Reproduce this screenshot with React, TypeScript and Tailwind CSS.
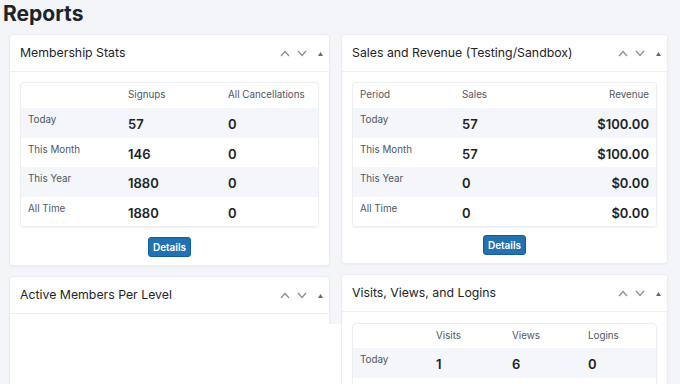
const membership = [
  { label: 'Today', signups: '57', cancels: '0' },
  { label: 'This Month', signups: '146', cancels: '0' },
  { label: 'This Year', signups: '1880', cancels: '0' },
  { label: 'All Time', signups: '1880', cancels: '0' },
]

const sales = [
  { label: 'Today', sales: '57', revenue: '$100.00' },
  { label: 'This Month', sales: '57', revenue: '$100.00' },
  { label: 'This Year', sales: '0', revenue: '$0.00' },
  { label: 'All Time', sales: '0', revenue: '$0.00' },
]

const HeaderControls = () => (
  <div className="flex items-center">
    <svg width="10" height="7" viewBox="0 0 10 7" className="mr-[7px]">
      <polyline points="1,6 5,1.5 9,6" fill="none" stroke="#8c8f94" strokeWidth="1.3" />
    </svg>
    <svg width="10" height="7" viewBox="0 0 10 7" className="mr-[11px]">
      <polyline points="1,1 5,5.5 9,1" fill="none" stroke="#8c8f94" strokeWidth="1.3" />
    </svg>
    <svg width="5" height="4" viewBox="0 0 5 4">
      <polygon points="0,4 2.5,0 5,4" fill="#646970" />
    </svg>
  </div>
)

const Panel = ({ title, className, children }: { title: string; className?: string; children?: React.ReactNode }) => (
  <div className={`bg-white rounded-[4px] border border-[#e9ecf0] shadow-[0_1px_2px_rgba(0,0,0,0.04)] flex flex-col ${className ?? ''}`}>
    <div className="h-[37px] shrink-0 flex items-center justify-between pl-[10px] pr-[6px] pt-[1px] border-b border-[#eef0f3]">
      <span className="text-[12.3px] text-[#1d2327]">{title}</span>
      <HeaderControls />
    </div>
    {children}
  </div>
)

const DetailsButton = () => (
  <div className="flex justify-center">
    <button className="h-[20px] w-[43px] bg-[#2271b1] border border-[#135e96] rounded-[3px] text-white text-[10px] font-semibold">
      Details
    </button>
  </div>
)

export default function App() {
  return (
    <div
      className="w-[680px] h-[384px] overflow-hidden bg-[#f3f5f8] text-[#1d2327]"
      style={{ fontFamily: 'Inter, "Liberation Sans", sans-serif' }}
    >
      <h1 className="text-[21px] font-bold leading-[28px] pl-[3px] h-[34px]">Reports</h1>
      <div className="flex pl-[9px] gap-[11px]">
        {/* left column */}
        <div className="w-[321px] flex flex-col gap-[10px]">
          <Panel title="Membership Stats" className="h-[232px]">
            <div className="px-[10px] pt-[10px]">
              <div className="rounded-[4px] border border-[#eceef2] shadow-[0_1px_2px_rgba(0,0,0,0.06)] overflow-hidden">
                <div className="grid grid-cols-[100px_100px_1fr] pl-[7px] h-[25px] items-center text-[9.8px] text-[#50575e]">
                  <span></span>
                  <span>Signups</span>
                  <span>All Cancellations</span>
                </div>
                {membership.map((r, i) => (
                  <div
                    key={r.label}
                    className={`grid grid-cols-[100px_100px_1fr] pl-[7px] h-[29.5px] items-start ${i % 2 === 0 ? 'bg-[#f4f6f9]' : 'bg-white'}`}
                  >
                    <span className="text-[9.8px] text-[#50575e] pt-[5px] leading-[14px]">{r.label}</span>
                    <span className="text-[13px] font-semibold pt-[7px] leading-[18px]">{r.signups}</span>
                    <span className="text-[13px] font-semibold pt-[7px] leading-[18px]">{r.cancels}</span>
                  </div>
                ))}
              </div>
            </div>
            <div className="mt-[10px]">
              <DetailsButton />
            </div>
          </Panel>
          <Panel title="Active Members Per Level" className="h-[200px]">
            <div className="flex-1 pt-[10px]">
              <div className="w-[calc(100%+12px)] h-full bg-white"></div>
            </div>
          </Panel>
        </div>

        {/* right column */}
        <div className="w-[327px] flex flex-col gap-[10px]">
          <Panel title="Sales and Revenue (Testing/Sandbox)" className="h-[230px]">
            <div className="px-[10px] pt-[10px]">
              <div className="rounded-[4px] border border-[#eceef2] shadow-[0_1px_2px_rgba(0,0,0,0.06)] overflow-hidden">
                <div className="grid grid-cols-[102px_100px_1fr] px-[7px] h-[25px] items-center text-[9.8px] text-[#50575e]">
                  <span>Period</span>
                  <span>Sales</span>
                  <span className="text-right">Revenue</span>
                </div>
                {sales.map((r, i) => (
                  <div
                    key={r.label}
                    className={`grid grid-cols-[102px_100px_1fr] px-[7px] h-[29.5px] items-start ${i % 2 === 0 ? 'bg-[#f4f6f9]' : 'bg-white'}`}
                  >
                    <span className="text-[9.8px] text-[#50575e] pt-[5px] leading-[14px]">{r.label}</span>
                    <span className="text-[13px] font-semibold pt-[7px] leading-[18px]">{r.sales}</span>
                    <span className="text-[13px] font-semibold pt-[7px] leading-[18px] text-right">{r.revenue}</span>
                  </div>
                ))}
              </div>
            </div>
            <div className="mt-[8px]">
              <DetailsButton />
            </div>
          </Panel>
          <Panel title="Visits, Views, and Logins" className="h-[200px]">
            <div className="px-[10px] pt-[11px]">
              <div className="rounded-[4px] border border-[#eceef2] shadow-[0_1px_2px_rgba(0,0,0,0.06)] overflow-hidden">
                <div className="grid grid-cols-[76px_76px_76px_1fr] pl-[7px] h-[24px] items-center text-[9.8px] text-[#50575e]">
                  <span></span>
                  <span>Visits</span>
                  <span>Views</span>
                  <span>Logins</span>
                </div>
                <div className="grid grid-cols-[76px_76px_76px_1fr] pl-[7px] h-[29.5px] items-start bg-[#f4f6f9]">
                  <span className="text-[9.8px] text-[#50575e] pt-[5px] leading-[14px]">Today</span>
                  <span className="text-[13px] font-semibold pt-[7px] leading-[18px]">1</span>
                  <span className="text-[13px] font-semibold pt-[7px] leading-[18px]">6</span>
                  <span className="text-[13px] font-semibold pt-[7px] leading-[18px]">0</span>
                </div>
                <div className="h-[29.5px] bg-white"></div>
              </div>
            </div>
          </Panel>
        </div>
      </div>
    </div>
  )
}
